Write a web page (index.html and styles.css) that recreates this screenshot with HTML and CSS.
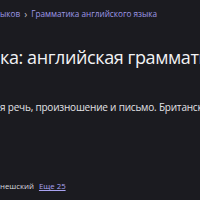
FILE: index.html
```html
<!DOCTYPE html>
<html lang="ru">
<head>
<meta charset="utf-8">
<link rel="stylesheet" href="styles.css">
</head>
<body>
<div class="page">
  <nav class="crumbs">
    <span class="crumb">ыков</span>
    <span class="sep">›</span>
    <span class="crumb">Грамматика английского языка</span>
  </nav>
  <h1 class="title">ка: английская грамматика</h1>
  <p class="desc">я речь, произношение и письмо. Британский</p>
  <div class="meta">
    <span class="tag">нешский</span>
    <a class="more" href="#">Еще 25</a>
  </div>
</div>
</body>
</html>
```
FILE: styles.css
```css
html, body {
  margin: 0;
  padding: 0;
  background: #1b1b20;
  overflow: hidden;
}
.page {
  width: 200px;
  height: 200px;
  display: flex;
  flex-direction: column;
  font-family: "Open Sans", "Noto Sans", sans-serif;
  white-space: nowrap;
  overflow: hidden;
}
.crumbs {
  display: flex;
  align-items: center;
  gap: 4px;
  margin-top: 7px;
  height: 13px;
  font-size: 8.2px;
  color: #9e98e6;
}
.sep {
  color: #b9b9c4;
  font-size: 10px;
}
.title {
  margin: 24px 0 0 0;
  font-size: 18px;
  font-weight: 400;
  letter-spacing: -0.4px;
  line-height: 26px;
  color: #f2f2f4;
}
.desc {
  margin: 29px 0 0 0;
  font-size: 10px;
  letter-spacing: -0.2px;
  line-height: 16px;
  color: #e2e2e6;
}
.meta {
  display: flex;
  gap: 5px;
  margin-top: 65px;
  font-size: 7.8px;
  line-height: 12px;
  color: #d8d8de;
}
.more {
  color: #a9a3f0;
  text-decoration: underline;
}
```
